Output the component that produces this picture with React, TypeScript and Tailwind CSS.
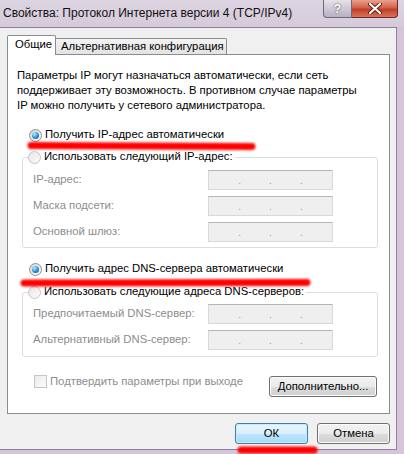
const txt = "font-['Liberation_Sans',Arial,sans-serif] text-[11.3px]";

function Radio({ checked, disabled }: { checked?: boolean; disabled?: boolean }) {
  return (
    <span
      className={
        "flex h-[13px] w-[13px] shrink-0 items-center justify-center rounded-full border " +
        (disabled
          ? "border-[#c4c4c4] bg-gradient-to-br from-[#e6e6e6] to-[#fbfbfb]"
          : "border-[#8e8f8f] bg-gradient-to-br from-[#d4d4d4] to-[#ffffff]")
      }
    >
      {checked && (
        <span className="h-[7px] w-[7px] rounded-full bg-[radial-gradient(circle_at_35%_30%,#b9ecff,#2a8fd0_55%,#0e4f86)]" />
      )}
    </span>
  );
}

function IpBox() {
  return (
    <div className="flex h-[20px] w-[125px] items-end justify-center gap-[28px] border border-[#d8d8d8] border-t-[#b5b5b5] bg-[#efefef] pb-[3px] text-[10px] leading-none text-[#9a9a9a]">
      <span>.</span>
      <span>.</span>
      <span>.</span>
    </div>
  );
}

function Row({ label }: { label: string }) {
  return (
    <div className="flex h-[20px] items-center pl-[10px]">
      <span className="w-[175px] whitespace-nowrap text-[#8d8d8d]">{label}</span>
      <IpBox />
    </div>
  );
}

function Button({ children, primary, className = "" }: { children: string; primary?: boolean; className?: string }) {
  return (
    <div
      className={
        "flex h-[21px] items-center justify-center whitespace-nowrap rounded-[3px] border text-black " +
        (primary
          ? "border-[#3c7fb1] bg-[linear-gradient(#eaf6fd_0%,#d9f0fc_50%,#bee6fd_51%,#a7d9f5_100%)] shadow-[inset_0_0_0_1px_#c8ecfc] "
          : "border-[#707070] bg-[linear-gradient(#f2f2f2_0%,#ebebeb_50%,#dddddd_51%,#cfcfcf_100%)] shadow-[inset_0_0_0_1px_#fcfcfc] ") +
        className
      }
    >
      {children}
    </div>
  );
}

export default function App() {
  return (
    <div className={"relative flex h-[454px] w-[404px] flex-col overflow-hidden bg-[#d7c4da] leading-none text-black " + txt}>
      {/* title bar */}
      <div className="flex h-[27px] shrink-0 items-start justify-between bg-gradient-to-b from-[#ddd4e1] to-[#d5cadb]">
        <span className="whitespace-nowrap pl-[3px] pt-[7px] text-[12px] text-[#111]">Свойства: Протокол Интернета версии 4 (TCP/IPv4)</span>
        <div className="mr-[6px] flex">
          <div className="flex h-[18px] w-[29px] items-center justify-center rounded-bl-[4px] border border-t-0 border-[#6f6878] bg-gradient-to-b from-[#e6e1ea] to-[#b9b0c0] text-[12px] font-bold text-white [text-shadow:0_0_2px_#333]">
            ?
          </div>
          <div className="flex h-[18px] w-[46px] items-center justify-center rounded-br-[4px] border border-l-0 border-t-0 border-[#6e2a22] bg-[linear-gradient(#eaa08e_0%,#d0624c_45%,#c13d26_55%,#d8745c_100%)]">
            <svg width="14" height="11" viewBox="0 0 14 11">
              <path d="M2 1 L12 10 M12 1 L2 10" stroke="#5a1a12" strokeWidth="4" strokeLinecap="round" />
              <path d="M2 1 L12 10 M12 1 L2 10" stroke="#ffffff" strokeWidth="2.2" strokeLinecap="round" />
            </svg>
          </div>
        </div>
      </div>

      {/* dialog body */}
      <div className="mb-[4px] mr-[7px] flex flex-1 flex-col border-y border-r border-y-[#8d8294] border-r-[#8d8294] bg-[#f0f0f0] pt-[7px]">
        {/* tabs */}
        <div className="flex items-end px-[7px]">
          <div className="relative z-10 -mb-px flex h-[20px] w-[49px] items-center whitespace-nowrap rounded-t-[2px] border-x border-t border-[#898c95] bg-white pb-[2px] pl-[7px]">
            Общие
          </div>
          <div className="flex h-[16px] w-[171px] items-center whitespace-nowrap rounded-tr-[2px] border-r border-t border-[#898c95] bg-gradient-to-b from-[#f3f3f3] to-[#e3e3e3] pl-[5px]">
            Альтернативная конфигурация
          </div>
        </div>

        {/* panel */}
        <div className="ml-[7px] mr-[6px] flex h-[360px] flex-col border border-[#898c95] bg-white">
          <p className="ml-[9px] mt-[13px] whitespace-nowrap leading-[15px]">
            Параметры IP могут назначаться автоматически, если сеть
            <br />
            поддерживает эту возможность. В противном случае параметры
            <br />
            IP можно получить у сетевого администратора.
          </p>

          <div className="ml-[21px] mt-[14px] flex h-[16px] items-center gap-[3px] whitespace-nowrap">
            <Radio checked />
            <span>Получить IP-адрес автоматически</span>
          </div>

          <fieldset className="ml-[14px] mt-[6px] w-[356px] rounded-[3px] border border-[#d5dfe5] pb-[5px]">
            <legend className="ml-[5px] flex h-[16px] items-center gap-[3px] whitespace-nowrap pr-[2px]">
              <Radio disabled />
              <span>Использовать следующий IP-адрес:</span>
            </legend>
            <div className="mt-[5px] flex flex-col gap-[6px]">
              <Row label="IP-адрес:" />
              <Row label="Маска подсети:" />
              <Row label="Основной шлюз:" />
            </div>
          </fieldset>

          <div className="ml-[21px] mt-[13px] flex h-[16px] items-center gap-[3px] whitespace-nowrap">
            <Radio checked />
            <span>Получить адрес DNS-сервера автоматически</span>
          </div>

          <fieldset className="ml-[14px] mt-[7px] w-[356px] rounded-[3px] border border-[#d5dfe5] pb-[6px]">
            <legend className="ml-[5px] flex h-[16px] items-center gap-[3px] whitespace-nowrap pr-[2px]">
              <Radio disabled />
              <span>Использовать следующие адреса DNS-серверов:</span>
            </legend>
            <div className="mt-[4px] flex flex-col gap-[6px]">
              <Row label="Предпочитаемый DNS-сервер:" />
              <Row label="Альтернативный DNS-сервер:" />
            </div>
          </fieldset>

          <div className="ml-[26px] mr-[12px] mt-[18px] flex items-start justify-between">
            <div className="flex items-center gap-[3px] whitespace-nowrap">
              <span className="h-[13px] w-[13px] border border-[#c5c5c5] bg-gradient-to-br from-[#ececec] to-[#fafafa]" />
              <span className="text-[#8d8d8d]">Подтвердить параметры при выходе</span>
            </div>
            <Button className="mt-[1px] w-[108px]">Дополнительно...</Button>
          </div>
        </div>

        {/* OK / Cancel */}
        <div className="mr-[6px] mt-[9px] flex justify-end gap-[9px]">
          <Button primary className="w-[73px]">ОК</Button>
          <Button className="w-[73px]">Отмена</Button>
        </div>
      </div>

      {/* red annotation strokes */}
      <svg className="pointer-events-none absolute left-0 top-0" width="404" height="454">
        <defs>
          <filter id="soft" x="-10%" y="-100%" width="120%" height="300%">
            <feGaussianBlur stdDeviation="1.1" />
          </filter>
        </defs>
        <g stroke="#ff0000" strokeLinecap="round" filter="url(#soft)">
          <line x1="31" y1="145.5" x2="252" y2="146.5" strokeWidth="7" />
          <line x1="24" y1="283" x2="307" y2="282.5" strokeWidth="7" />
          <line x1="241" y1="450" x2="314" y2="450" strokeWidth="7" />
        </g>
      </svg>
    </div>
  );
}
